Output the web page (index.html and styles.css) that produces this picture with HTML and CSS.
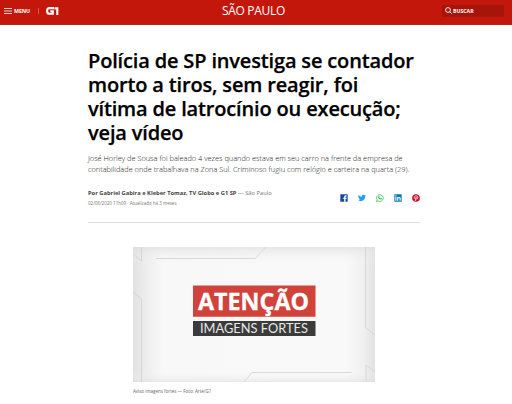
FILE: index.html
```html
<!DOCTYPE html>
<html lang="pt-BR">
<head>
<meta charset="utf-8">
<title>São Paulo | G1</title>
<link rel="stylesheet" href="styles.css">
</head>
<body>
<header class="bar">
  <div class="bar-left">
    <svg class="burger" viewBox="0 0 8 6"><path d="M0 .5h8M0 3h8M0 5.5h8" stroke="#fff" stroke-width=".8"/></svg>
    <span class="menu">MENU</span>
    <i class="divider"></i>
    <svg class="logo" viewBox="0 0 13 8" fill="none" stroke="#fff" stroke-width="2.1"><path d="M8 1.1H3.5Q1.1 1.1 1.1 3.9T3.5 6.8H6.8V4.3H4.3M8.4 1.4h2.9V8"/></svg>
  </div>
  <div class="section">SÃO PAULO</div>
  <div class="search">
    <svg viewBox="0 0 7 7" fill="none" stroke="#fff" stroke-width=".9"><circle cx="3" cy="3" r="2.4"/><path d="M4.8 4.8 6.7 6.7"/></svg>
    <span>BUSCAR</span>
  </div>
</header>
<main class="article">
  <h1><span>Polícia de SP investiga se contador</span><span>morto a tiros, sem reagir, foi</span><span>vítima de latrocínio ou execução;</span><span>veja vídeo</span></h1>
  <p class="lead"><span>José Horley de Sousa foi baleado 4 vezes quando estava em seu carro na frente da empresa de</span><span>contabilidade onde trabalhava na Zona Sul. Criminoso fugiu com relógio e carteira na quarta (29).</span></p>
  <div class="meta">
    <div>
      <p class="author"><b>Por Gabriel Gabira e Kleber Tomaz, TV Globo e G1 SP</b> — São Paulo</p>
      <p class="date">02/08/2020 11h09 · Atualizado há 3 meses</p>
    </div>
    <div class="share">
      <svg viewBox="0 0 24 24"><path fill="#17479e" d="M1 1h22v22h-6.5v-8h3l.5-4h-3.500V9c0-1.300.5-1.800 2-1.800h1.500V4h-3c-3 0-4.500 2-4.500 4.500V11H9.500v4h3v8H1z"/></svg>
      <svg viewBox="0 0 24 24"><path fill="#1da1f2" d="M24 4.600a10 10 0 0 1-2.800.8 5 5 0 0 0 2.100-2.700 10 10 0 0 1-3.100 1.200 4.900 4.900 0 0 0-8.400 4.500A14 14 0 0 1 1.700 3.200a4.900 4.900 0 0 0 1.500 6.500 5 5 0 0 1-2.200-.6 4.900 4.900 0 0 0 3.900 4.900 5 5 0 0 1-2.200.1 4.900 4.900 0 0 0 4.600 3.400A10 10 0 0 1 0 19.500 14 14 0 0 0 21.500 7 10 10 0 0 0 24 4.600z"/></svg>
      <svg viewBox="0 0 24 24"><path fill="none" stroke="#32b843" stroke-width="2.200" d="M1.500 22.500 3 17a10 10 0 1 1 4 4z"/><path fill="#32b843" d="M8 6.500c1-1 1.600-.5 2 .6.600 1.600.700 1.500-.3 2.900 1 2 2.300 3 4 3.800 1.300-1.600 1.300-1.700 2.900-.9 1.500.7 1.500 1 1 2.300-1 2-3.600 2-6.300.6-3-1.600-7.300-6.500-3.300-9.300z"/></svg>
      <svg viewBox="0 0 24 24"><path fill="#0e76b3" fill-rule="evenodd" d="M1 1h22v22H1zM4 9v11h3.200V9zM4 4v3.200h3.200V4zM9.500 9v11h3.200v-6c0-3 4-3 4 0v6H20v-7c0-5-5.500-5.500-7.300-2.500V9z"/></svg>
      <svg viewBox="0 0 24 24"><circle cx="12" cy="12" r="11.500" fill="#c8102e"/><path fill="none" stroke="#fff" stroke-width="2.300" d="M8 14c-3-4 0-8.500 4.500-8.500 6.500 0 6.500 9.500 1.500 9.500-1.500 0-2.500-1-2.500-1M12.500 9 9.500 21"/></svg>
    </div>
  </div>
  <figure>
    <svg class="picture" viewBox="0 0 242 135">
      <defs>
        <linearGradient id="h"><stop offset="0" stop-color="#e2e2e2"/><stop offset=".06" stop-color="#eee"/><stop offset=".12" stop-color="#f8f8f8"/><stop offset=".88" stop-color="#f9f9f9"/><stop offset=".95" stop-color="#f0f0f0"/><stop offset="1" stop-color="#e2e2e2"/></linearGradient>
        <linearGradient id="v" x2="0" y2="1"><stop offset="0" stop-color="#ddd" stop-opacity=".65"/><stop offset=".08" stop-color="#eee" stop-opacity=".25"/><stop offset=".14" stop-color="#f9f9f9" stop-opacity="0"/><stop offset=".92" stop-color="#f9f9f9" stop-opacity="0"/><stop offset="1" stop-color="#ddd" stop-opacity=".55"/></linearGradient>
      </defs>
      <path fill="url(#h)" d="M0 0h242v135H0z"/><path fill="url(#v)" d="M0 0h242v135H0z"/>
      <path fill="none" stroke="#d2d2d2" stroke-width=".8" d="M0 7l8.500 7V0M0 45l8.500 7v83M23 11.500h99.500L132.500 0M111 135l8-9.500h99.500M232.500 0v80.500l9.500 7.500M242 125l-9-7v17"/>
      <path fill="#d1423b" d="M60 38.500h122.500v31.300H60z"/>
      <path fill="#3b3b3b" d="M60 74h122.500v15H60z"/>
      <text class="alert" x="65" y="62.500" textLength="111" lengthAdjust="spacingAndGlyphs">ATENÇÃO</text>
      <text class="strong" x="67" y="85.800" textLength="108" lengthAdjust="spacingAndGlyphs">IMAGENS FORTES</text>
    </svg>
    <figcaption>Aviso imagens fortes — Foto: Arte/G1</figcaption>
  </figure>
</main>
</body>
</html>
```
FILE: styles.css
```css
* { box-sizing: border-box; }
body { margin: 0; background: #fff; font-family: "Open Sans", sans-serif; overflow: hidden; }
h1, p, figure { margin: 0; }
.bar { display: grid; grid-template-columns: 1fr auto 1fr; align-items: center; height: 25px; padding: 0 8px 4px 4px; background: #c4170c; border-bottom: 1px solid #b5281f; color: #fff; }
.bar-left { display: flex; align-items: center; }
.burger { width: 8px; height: 6px; }
.menu { margin-left: 2px; width: 16px; font-size: 5.3px; font-weight: 700; line-height: 8px; letter-spacing: -.1px; }
.divider { width: 1px; height: 6px; margin-left: 8px; background: #d95750; }
.logo { width: 13px; height: 8px; margin-left: 7px; }
.section { margin-right: 1px; padding-top: 1px; font-size: 12px; line-height: 20px; letter-spacing: -.3px; }
.search { justify-self: end; display: flex; align-items: center; gap: 1px; width: 62px; height: 12px; padding-left: 3px; border-radius: 1px; background: #a7140a; font-size: 5.2px; font-weight: 700; }
.search svg { width: 7px; height: 7px; }
.article { width: 332px; margin: 0 0 0 88px; }
h1 { padding-top: 24px; font-size: 20px; font-weight: 600; line-height: 24px; letter-spacing: -.16px; color: #000; -webkit-text-stroke: .25px #000; white-space: nowrap; }
h1 span, .lead span { display: block; }
.lead { margin-top: 8px; font-size: 7.38px; font-weight: 300; line-height: 10.5px; color: #222; white-space: nowrap; }
.meta { display: flex; justify-content: space-between; height: 34px; margin-top: 15px; border-bottom: 1px solid #ddd; }
.author { font-size: 5.75px; line-height: 9px; color: #777; }
.author b { color: #444; }
.date { margin-top: 1px; font-size: 4.5px; line-height: 8px; color: #777; }
.share { display: flex; gap: 10px; padding-top: 5px; }
.share svg { width: 8px; height: 8px; }
figure { width: 242px; margin: 24px 0 0 45px; }
.picture { display: block; width: 242px; height: 135px; }
.alert { font: 700 22.5px "Open Sans", sans-serif; fill: #fff; stroke: #fff; stroke-width: .3px; }
.strong { font: 400 13px Lato, sans-serif; fill: #e8e8e8; }
figcaption { margin-top: 5px; font-size: 4.5px; line-height: 8px; color: #666; }
```
